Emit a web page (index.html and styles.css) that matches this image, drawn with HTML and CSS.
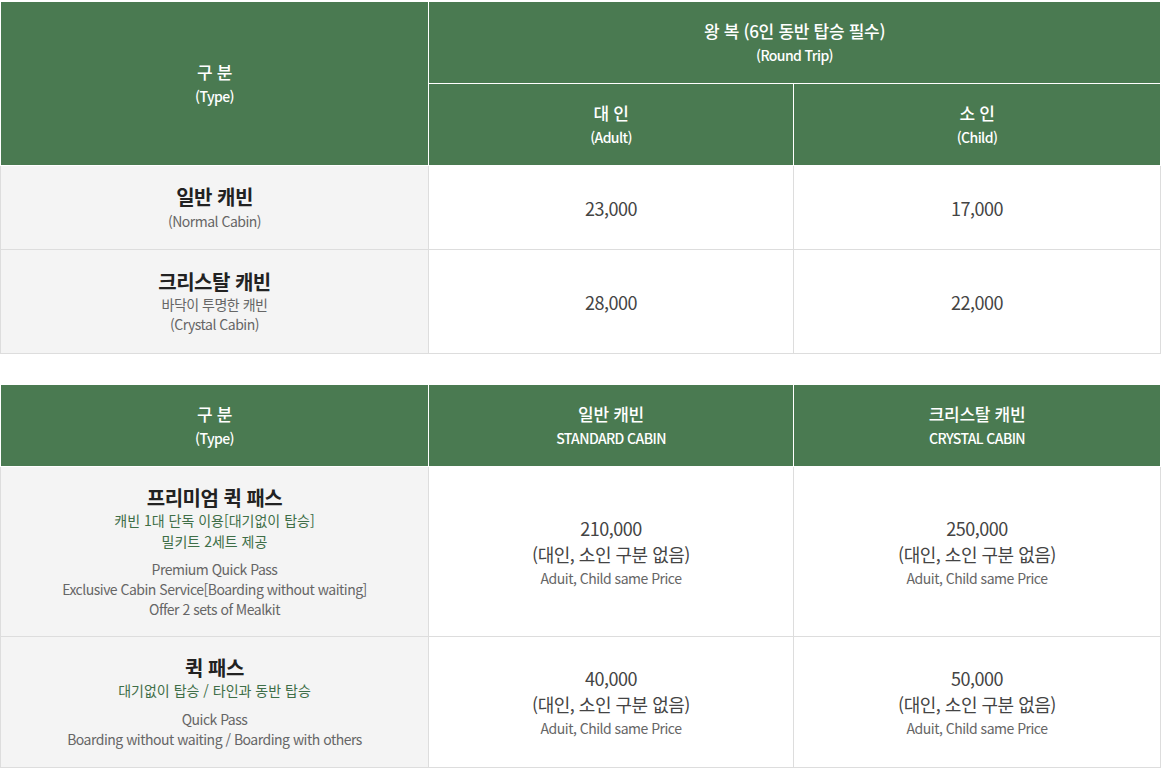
FILE: index.html
```html
<!DOCTYPE html>
<html lang="ko">
<head>
<meta charset="utf-8">
<link rel="stylesheet" href="styles.css">
</head>
<body>
<div class="page">
  <table class="price">
    <colgroup><col class="c1"><col class="c2"><col class="c3"></colgroup>
    <thead>
      <tr class="h1">
        <th rowspan="2"><span class="ko">구 분</span><span class="en">(Type)</span></th>
        <th colspan="2"><span class="ko">왕 복 (6인 동반 탑승 필수)</span><span class="en">(Round Trip)</span></th>
      </tr>
      <tr class="h2">
        <th><span class="ko">대 인</span><span class="en">(Adult)</span></th>
        <th><span class="ko">소 인</span><span class="en">(Child)</span></th>
      </tr>
    </thead>
    <tbody>
      <tr class="r1">
        <th><span class="title">일반 캐빈</span><span class="sub">(Normal Cabin)</span></th>
        <td><span class="amount">23,000</span></td>
        <td><span class="amount">17,000</span></td>
      </tr>
      <tr class="r2">
        <th><span class="title">크리스탈 캐빈</span><span class="sub">바닥이 투명한 캐빈</span><span class="sub">(Crystal Cabin)</span></th>
        <td><span class="amount">28,000</span></td>
        <td><span class="amount">22,000</span></td>
      </tr>
    </tbody>
  </table>

  <table class="price second">
    <colgroup><col class="c1"><col class="c2"><col class="c3"></colgroup>
    <thead>
      <tr class="h1">
        <th><span class="ko">구 분</span><span class="en">(Type)</span></th>
        <th><span class="ko">일반 캐빈</span><span class="en">STANDARD CABIN</span></th>
        <th><span class="ko">크리스탈 캐빈</span><span class="en">CRYSTAL CABIN</span></th>
      </tr>
    </thead>
    <tbody>
      <tr class="r3">
        <th>
          <span class="title">프리미엄 퀵 패스</span>
          <span class="green">캐빈 1대 단독 이용[대기없이 탑승]</span>
          <span class="green">밀키트 2세트 제공</span>
          <span class="eng first">Premium Quick Pass</span>
          <span class="eng">Exclusive Cabin Service[Boarding without waiting]</span>
          <span class="eng">Offer 2 sets of Mealkit</span>
        </th>
        <td><span class="amount">210,000</span><span class="amount">(대인, 소인 구분 없음)</span><span class="note">Aduit, Child same Price</span></td>
        <td><span class="amount">250,000</span><span class="amount">(대인, 소인 구분 없음)</span><span class="note">Aduit, Child same Price</span></td>
      </tr>
      <tr class="r4">
        <th>
          <span class="title">퀵 패스</span>
          <span class="green">대기없이 탑승 / 타인과 동반 탑승</span>
          <span class="eng first">Quick Pass</span>
          <span class="eng">Boarding without waiting / Boarding with others</span>
        </th>
        <td><span class="amount">40,000</span><span class="amount">(대인, 소인 구분 없음)</span><span class="note">Aduit, Child same Price</span></td>
        <td><span class="amount">50,000</span><span class="amount">(대인, 소인 구분 없음)</span><span class="note">Aduit, Child same Price</span></td>
      </tr>
    </tbody>
  </table>
</div>
</body>
</html>
```

FILE: styles.css
```css
html, body {
  margin: 0;
  padding: 0;
  background: #ffffff;
}
body {
  font-family: "Noto Sans CJK KR", "Noto Sans", sans-serif;
  color: #444;
}
.page {
  padding-top: 1px;
  width: 1160px;
}
.price {
  width: 1160px;
  border-collapse: collapse;
  table-layout: fixed;
  border: 1px solid #dddddd;
}
.price.second {
  margin-top: 30px;
}
.c1 { width: 428px; }
.c2 { width: 365px; }
.c3 { width: 367px; }

.price th, .price td {
  text-align: center;
  vertical-align: middle;
  padding: 0;
}
.price span {
  display: block;
}
.price thead th {
  background: #4a7a51;
  color: #ffffff;
  border: 1px solid #ffffff;
  font-weight: 500;
}
.price thead .ko {
  font-size: 17px;
  line-height: 24px;
  letter-spacing: -0.3px;
}
.price thead .en {
  font-size: 14px;
  line-height: 22px;
  margin-top: 1px;
  letter-spacing: -0.6px;
}
.price tbody th, .price tbody td {
  border: 1px solid #dddddd;
}
.price tbody th {
  background: #f4f4f4;
  font-weight: 400;
}
.h1 { height: 82px; }
.h2 { height: 82px; }
.r1 { height: 84px; }
.r2 { height: 104px; }
.r3 { height: 170px; }
.r4 { height: 131px; }

.title {
  font-size: 20px;
  line-height: 25px;
  font-weight: 700;
  letter-spacing: -0.5px;
  color: #222;
}
.sub {
  font-size: 14px;
  line-height: 20px;
  letter-spacing: -0.5px;
  color: #666;
}
.r1 .sub {
  margin-top: 2px;
}
.green {
  font-size: 14px;
  line-height: 21px;
  color: #3e6e47;
}
.eng {
  font-size: 14px;
  line-height: 20px;
  letter-spacing: -0.5px;
  color: #666;
}
.eng.first {
  margin-top: 7px;
}
.r4 .eng.first {
  margin-top: 8px;
}
.amount {
  font-size: 18px;
  line-height: 26px;
  letter-spacing: -0.5px;
  color: #444;
}
.note {
  font-size: 14px;
  line-height: 22px;
  letter-spacing: -0.5px;
  color: #666;
}
```
